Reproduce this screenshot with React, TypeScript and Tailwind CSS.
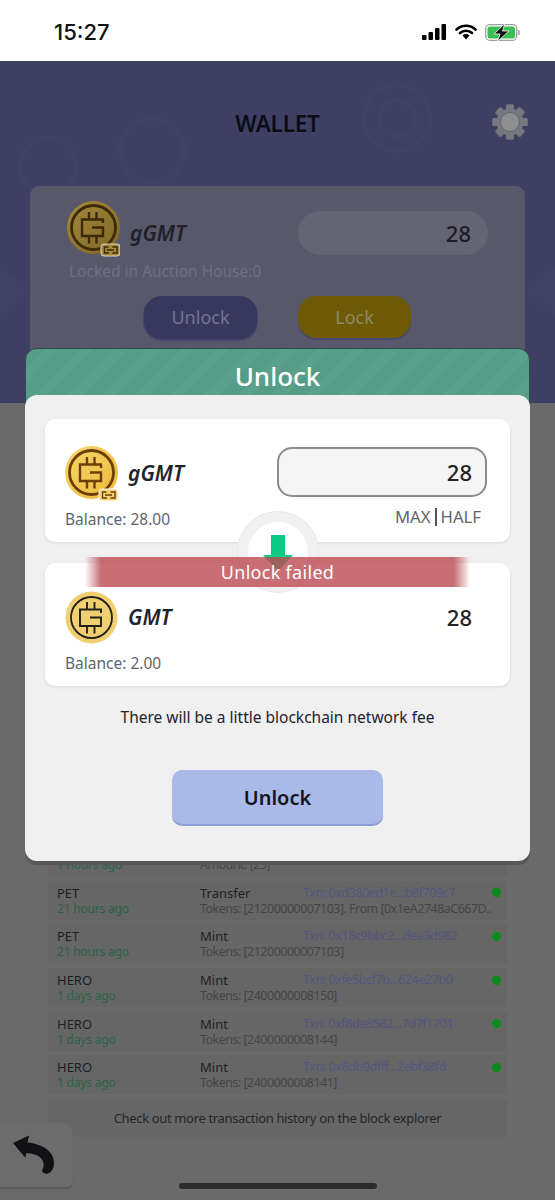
import React from "react";

function Glyph({ color, sw = 2.4 }: { color: string; sw?: number }) {
  return (
    <g fill="none" stroke={color} strokeWidth={sw}>
      <path d="M15 27 V18.5 H37 M36 22 V18.5 M15 27 V35 H36 V26.5 H25" />
      <path d="M22 11 V18.5 M29.5 11 V18.5 M22 35 V42.5 M29.5 35 V42.5" />
    </g>
  );
}

function Coin({ badge = false, dim = false }: { badge?: boolean; dim?: boolean }) {
  const id = dim ? "coinDim" : "coin";
  const dark = dim ? "#3d2a08" : "#6b3f05";
  return (
    <svg viewBox="0 0 53 56" className="h-[56px] w-[53px] shrink-0">
      <defs>
        <linearGradient id={id} x1="0" y1="0" x2="1" y2="1">
          <stop offset="0" stopColor={dim ? "#a58a3a" : "#f6d76c"} />
          <stop offset="1" stopColor={dim ? "#7d6526" : "#eeb93a"} />
        </linearGradient>
      </defs>
      <circle cx="26.5" cy="26.5" r="26.5" fill={`url(#${id})`} />
      <circle cx="26.5" cy="26.5" r="22" fill="none" stroke={dark} strokeWidth="2.8" />
      <Glyph color={dark} />
      {badge && (
        <g>
          <rect x="34" y="43" width="19" height="12" rx="3" fill={dim ? "#a58a3a" : "#f6d276"} stroke={dim ? "#e0d8c0" : "#fff"} strokeWidth="1" />
          <path d="M41.5 46 H37.5 V52 H42 M45.5 46 H50 V52 H45.5 M40 49 H47" fill="none" stroke={dark} strokeWidth="1.4" />
        </g>
      )}
    </svg>
  );
}

function PlainCoin() {
  return (
    <svg viewBox="0 0 53 53" className="h-[53px] w-[53px] shrink-0">
      <circle cx="26.5" cy="26.5" r="26" fill="#f0cf72" />
      <circle cx="26.5" cy="26.5" r="20.5" fill="none" stroke="#23201a" strokeWidth="1.8" />
      <Glyph color="#23201a" sw={1.9} />
    </svg>
  );
}

function Gear() {
  return (
    <svg viewBox="0 0 36 36" className="h-[36px] w-[36px]">
      <g fill="#77777f">
        {[0, 45, 90, 135, 180, 225, 270, 315].map((a) => (
          <rect key={a} x="14" y="0.5" width="8" height="35" rx="1.5" transform={`rotate(${a} 18 18)`} />
        ))}
      </g>
      <circle cx="18" cy="18" r="13.5" fill="#77777f" />
      <circle cx="18" cy="18" r="9.5" fill="#8f8f93" stroke="#636369" strokeWidth="1" />
    </svg>
  );
}

function Row({
  kind,
  time,
  action,
  txn,
  detail,
}: {
  kind: string;
  time: string;
  action: string;
  txn: string;
  detail: string;
}) {
  return (
    <div className="flex h-[39px] items-start bg-[#666667] pl-[9px] pt-[4px] text-[13px] leading-[16px]">
      <div className="w-[143px] shrink-0">
        <div className="text-[#1f1f1f]">{kind}</div>
        <div className="text-[12px] tracking-[-0.2px] text-[#2b6148]">{time}</div>
      </div>
      <div className="min-w-0 flex-1">
        <div className="flex items-center">
          <div className="w-[103px] shrink-0 text-[#1f1f1f]">{action}</div>
          <div className="w-[189px] shrink-0 text-[12.5px] tracking-[-0.42px] text-[#55557f]">{txn}</div>
          <div className="h-[9px] w-[9px] rounded-full bg-[#098a1b]" />
        </div>
        <div className="whitespace-nowrap text-[12.5px] tracking-[-0.52px] text-[#454545]">{detail}</div>
      </div>
    </div>
  );
}

const rows = [
  { kind: "GMT", time: "1 hours ago", action: "Transfer", txn: "Txn: 0x2c81ad07...f1e6a02b", detail: "Amount: [25]" },
  { kind: "PET", time: "21 hours ago", action: "Transfer", txn: "Txn: 0xd380ed1e...b8f709c7", detail: "Tokens: [21200000007103]. From [0x1eA2748aC667D.." },
  { kind: "PET", time: "21 hours ago", action: "Mint", txn: "Txn: 0x18c9bbc2...dea3d982", detail: "Tokens: [21200000007103]" },
  { kind: "HERO", time: "1 days ago", action: "Mint", txn: "Txn: 0xfe5bcf7b...624e27b0", detail: "Tokens: [2400000008150]" },
  { kind: "HERO", time: "1 days ago", action: "Mint", txn: "Txn: 0xf8de8582...7d7f1701", detail: "Tokens: [2400000008144]" },
  { kind: "HERO", time: "1 days ago", action: "Mint", txn: "Txn: 0x8db9dfff...2ebf38fd", detail: "Tokens: [2400000008141]" },
];

export default function App() {
  return (
    <div className="relative h-[1200px] w-[555px] overflow-hidden bg-[#6a6a6b] font-['Noto_Sans',sans-serif]">
      {/* status bar */}
      <div className="flex h-[61px] items-center justify-between bg-white pl-[54px] pr-[35px] pt-[3px]">
        <span className="font-['Inter',sans-serif] text-[22px] font-medium text-[#111]">15:27</span>
        <div className="flex items-center gap-[8px]">
          <svg viewBox="0 0 25 16" className="h-[16px] w-[25px]">
            <rect x="0" y="11" width="4.5" height="5" rx="1" fill="#000" />
            <rect x="6.5" y="8" width="4.5" height="8" rx="1" fill="#000" />
            <rect x="13" y="4" width="4.5" height="12" rx="1" fill="#000" />
            <rect x="19.5" y="0" width="4.5" height="16" rx="1" fill="#000" />
          </svg>
          <svg viewBox="0 0 22 16" className="h-[16px] w-[22px]">
            <path d="M1.5 5.5 A14 14 0 0 1 20.5 5.5 M5 9 A9 9 0 0 1 17 9" fill="none" stroke="#000" strokeWidth="2.6" strokeLinecap="round" />
            <path d="M7.5 11.5 A5 5 0 0 1 14.5 11.5 L11 15.5 Z" fill="#000" />
          </svg>
          <svg viewBox="0 0 35 17" className="h-[17px] w-[35px] overflow-visible">
            <rect x="0.7" y="0.7" width="31" height="15.6" rx="4" fill="none" stroke="#a0a0a0" strokeWidth="1.3" />
            <rect x="2.5" y="2.5" width="27.5" height="12" rx="2.5" fill="#3bbf55" />
            <rect x="33" y="6" width="1.6" height="5" rx="0.8" fill="#a0a0a0" />
            <path d="M20 -0.5 L9 10 H15 L12.5 17.5 L24 7 H17.5 Z" fill="#111" stroke="#fff" strokeWidth="0.8" />
          </svg>
        </div>
      </div>

      {/* wallet header */}
      <div className="relative h-[342px] overflow-hidden bg-[#3f3f63]">
        <svg viewBox="0 0 555 342" className="absolute inset-0 h-[342px] w-[555px]">
          <g fill="none" stroke="#414165" strokeWidth="5">
            <circle cx="397" cy="57" r="33" />
            <circle cx="397" cy="57" r="18" />
            <circle cx="152" cy="90" r="32" />
            <circle cx="48" cy="105" r="28" />
          </g>
          <path d="M0 205 L30 230 L0 255 Z" fill="#414165" />
          <path d="M555 205 L525 230 L555 255 Z" fill="#414165" />
        </svg>
        <div className="relative flex h-[125px] items-center justify-center">
          <span className="text-[22.5px] font-semibold tracking-[-0.2px] text-[#0c0c16]">WALLET</span>
          <div className="absolute left-[492px] top-[43px]">
            <Gear />
          </div>
        </div>
        <div className="relative mx-[30px] h-[217px] rounded-t-[9px] bg-[#58586a] px-[37px] pt-[15px]">
          <div className="flex items-start">
            <Coin badge dim />
            <span className="ml-[10px] mt-[16px] text-[21px] font-semibold italic leading-[32px] text-[#20202a]">gGMT</span>
            <div className="ml-auto mt-[10px] flex h-[44px] w-[190px] items-center justify-end rounded-[22px] bg-[#646473] pr-[17px] text-[22px] font-medium text-[#1c1c26]">
              28
            </div>
          </div>
          <div className="mt-[3px] pl-[2px] text-[15.5px] leading-[22px] text-[#6f6f80]">Locked in Auction House:0</div>
          <div className="mt-[14px] flex gap-[41px] pl-[77px]">
            <div className="flex h-[43px] w-[113px] items-center justify-center rounded-[18px] bg-[#38385f] text-[18px] text-[#74748e] shadow-[0_1px_0_1px_#45456e]">
              Unlock
            </div>
            <div className="flex h-[42px] w-[113px] items-center justify-center rounded-[18px] bg-[#6e5a06] text-[18px] text-[#8f8a60] shadow-[0_2px_0_#47466c]">
              Lock
            </div>
          </div>
        </div>
      </div>

      {/* history list */}
      <div className="mx-[48px] mt-[434px] flex w-[459px] flex-col gap-[4.7px]">
        {rows.map((r) => (
          <Row key={r.txn} {...r} />
        ))}
        <div className="mt-[1px] flex h-[37px] items-center justify-center bg-[#666667] text-[13px] tracking-[-0.35px] text-[#262626]">
          Check out more transaction history on the block explorer
        </div>
      </div>

      {/* back button */}
      <div className="absolute bottom-[13px] left-0 flex h-[64px] w-[73px] items-center rounded-tr-[10px] rounded-br-[6px] bg-[#6c6c6d] pl-[12px] shadow-[0_2px_0_#5a5a5b,1px_0_0_#656566]">
        <svg viewBox="0 0 44 40" className="h-[40px] w-[44px]">
          <path d="M1 8 L17 0.5 L15.5 7.5 C30 9 42 16 42 28 C42 33 40 37 36 38.5 C33 39.5 29 37 30.5 34.5 C33 30 32 23 24 20 C20 18.5 16 18 14 18.5 L13.5 23 Z" fill="#111114" />
        </svg>
      </div>

      {/* home indicator */}
      <div className="absolute bottom-[11px] left-[179px] h-[6px] w-[198px] rounded-full bg-[#2c2c2e]" />

      {/* modal */}
      <div className="absolute left-[25px] top-[348px] w-[505px]">
        <div className="h-[60px] rounded-t-[12px] border border-[#2b4f45] bg-[#559d87] bg-[repeating-linear-gradient(135deg,#559d87_0,#559d87_14px,#59a18b_14px,#59a18b_24px)] pt-[8px] text-center text-[26px] font-medium leading-[38px] text-white">
          Unlock
        </div>
        <div className="relative -mt-[13px] flex h-[466px] flex-col rounded-[12px] bg-[#f0f0f0] px-[20px] pt-[24px] shadow-[0_4px_0_#58585a]">
          <div className="h-[123px] rounded-[10px] bg-white px-[20px] pt-[27px] shadow-[0_1px_3px_#d8d8d8]">
            <div className="flex items-center">
              <Coin badge />
              <span className="ml-[10px] text-[21px] font-semibold italic text-[#23232d]">gGMT</span>
              <div className="ml-auto flex h-[50px] w-[210px] -translate-x-[3px] -translate-y-[2px] items-center justify-end rounded-[15px] border-2 border-[#8c8c90] bg-[#f6f6f6] pr-[13px] text-[22px] font-medium text-[#222]">
                28
              </div>
            </div>
            <div className="flex items-start justify-between">
              <span className="pt-[7px] text-[15.5px] leading-[20px] text-[#63636b]">Balance: 28.00</span>
              <span className="mt-[3px] flex items-center pr-[9px] text-[16.7px] leading-[24px] text-[#63636b]">
                MAX<span className="mx-[4px] h-[18px] w-[2px] bg-[#55555c]" />HALF
              </span>
            </div>
          </div>

          <div className="mt-[21px] h-[123px] rounded-[10px] bg-white px-[20px] pt-[28px] shadow-[0_1px_3px_#d8d8d8]">
            <div className="flex items-center">
              <PlainCoin />
              <span className="ml-[10px] text-[21px] font-semibold italic text-[#23232d]">GMT</span>
              <span className="ml-auto pr-[18px] text-[22px] font-medium text-[#222]">28</span>
            </div>
            <div className="mt-[9px] text-[15.5px] leading-[20px] text-[#63636b]">Balance: 2.00</div>
          </div>

          <div className="mt-[20px] text-center text-[15.5px] leading-[22px] text-[#23232d]">
            There will be a little blockchain network fee
          </div>

          <div className="mx-auto mt-[42px] flex h-[54px] w-[211px] items-center justify-center rounded-[10px] bg-[#a9b9e8] pt-[2px] text-[20px] font-semibold text-[#15151d] shadow-[0_2px_0_#8d9fd8]">
            Unlock
          </div>

          {/* swap circle */}
          <div className="absolute left-[213px] top-[117px] flex h-[80px] w-[80px] items-center justify-center rounded-full border-[10px] border-[#f1f1f1] bg-white pt-[2px] shadow-[0_0_0_1px_#e8e8e8]">
            <svg viewBox="0 0 30 36" className="h-[36px] w-[30px]">
              <path d="M8 0 H22 V20 H30 L15 36 L0 20 H8 Z" fill="#0ccb85" />
            </svg>
          </div>
        </div>
      </div>

      {/* toast */}
      <div className="absolute left-[85px] top-[557px] flex h-[30px] w-[385px] items-center justify-center bg-[linear-gradient(90deg,transparent_0,#bb4a52cc_16px,#bb4a52cc_369px,transparent_100%)] text-[18px] tracking-[0.3px] text-white">
        Unlock failed
      </div>
    </div>
  );
}
